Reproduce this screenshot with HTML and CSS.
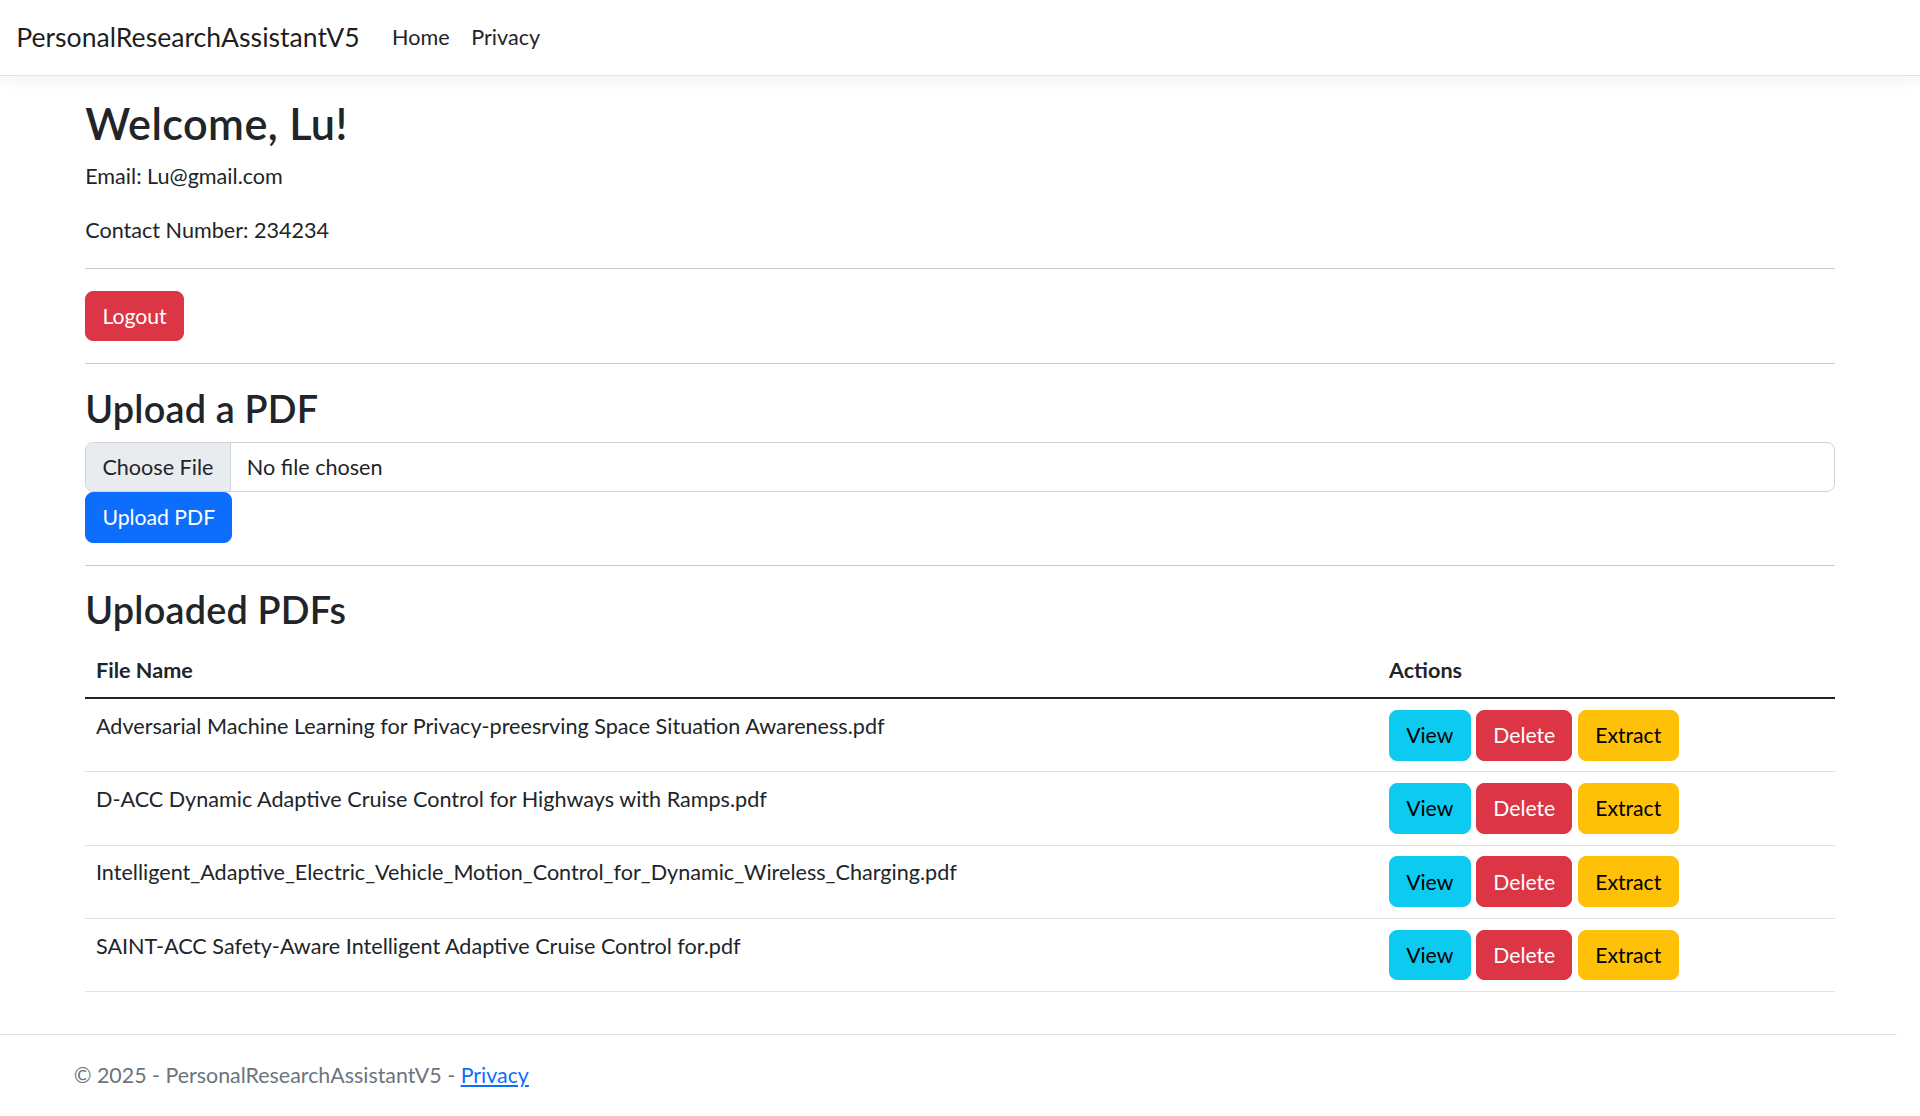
FILE: index.html
```html
<!DOCTYPE html>
<html lang="en">
<head>
<meta charset="utf-8">
<title>Home - PersonalResearchAssistantV5</title>
<link rel="stylesheet" href="styles.css">
</head>
<body>
<header>
  <nav class="navbar">
    <div class="navbar-inner">
      <a class="brand" href="#">PersonalResearchAssistantV5</a>
      <ul class="nav-links">
        <li><a class="nav-link" href="#">Home</a></li>
        <li><a class="nav-link" href="#">Privacy</a></li>
      </ul>
    </div>
  </nav>
</header>
<div class="container">
  <main class="main">
    <h2 class="welcome">Welcome, Lu!</h2>
    <p>Email: Lu@gmail.com</p>
    <p>Contact Number: 234234</p>
    <hr>
    <form class="form"><button type="button" class="btn btn-danger">Logout</button></form>
    <hr>
    <h3 class="section-title">Upload a PDF</h3>
    <form class="form">
      <div class="file-input"><span class="file-btn">Choose File</span><span class="file-name">No file chosen</span></div>
      <button type="button" class="btn btn-primary">Upload PDF</button>
    </form>
    <hr>
    <h3 class="section-title">Uploaded PDFs</h3>
    <table class="table">
      <thead>
        <tr><th class="col-name">File Name</th><th class="col-actions">Actions</th></tr>
      </thead>
      <tbody>
        <tr>
          <td>Adversarial Machine Learning for Privacy-preesrving Space Situation Awareness.pdf</td>
          <td><a class="btn btn-info">View</a> <a class="btn btn-danger">Delete</a> <a class="btn btn-warning">Extract</a></td>
        </tr>
        <tr>
          <td>D-ACC Dynamic Adaptive Cruise Control for Highways with Ramps.pdf</td>
          <td><a class="btn btn-info">View</a> <a class="btn btn-danger">Delete</a> <a class="btn btn-warning">Extract</a></td>
        </tr>
        <tr>
          <td>Intelligent_Adaptive_Electric_Vehicle_Motion_Control_for_Dynamic_Wireless_Charging.pdf</td>
          <td><a class="btn btn-info">View</a> <a class="btn btn-danger">Delete</a> <a class="btn btn-warning">Extract</a></td>
        </tr>
        <tr>
          <td>SAINT-ACC Safety-Aware Intelligent Adaptive Cruise Control for.pdf</td>
          <td><a class="btn btn-info">View</a> <a class="btn btn-danger">Delete</a> <a class="btn btn-warning">Extract</a></td>
        </tr>
      </tbody>
    </table>
  </main>
</div>
<footer class="footer">
  <div class="footer-inner">&copy; 2025 - PersonalResearchAssistantV5 - <a href="#">Privacy</a></div>
</footer>
</body>
</html>
```
FILE: styles.css
```css
* { box-sizing: border-box; }

html { font-size: 21.6px; }

body {
  margin: 0;
  min-height: 100vh;
  display: flex;
  flex-direction: column;
  font-family: "Lato", "Liberation Sans", sans-serif;
  font-size: 21.6px;
  line-height: 32.4px;
  color: #212529;
  background: #fff;
}

a { color: #0d6efd; }

.navbar {
  background: #fff;
  border-bottom: 1px solid #dee2e6;
  box-shadow: 0 5px 16px rgba(0, 0, 0, 0.05);
  margin-bottom: 21.6px;
  height: 76px;
  padding: 0 16.2px;
  display: flex;
  align-items: center;
}

.navbar-inner {
  display: flex;
  align-items: center;
}

.brand {
  font-size: 26.6px;
  line-height: 40.5px;
  color: rgba(0, 0, 0, 0.9);
  text-decoration: none;
  margin-right: 21.6px;
  padding: 6.75px 0;
}

.nav-links {
  list-style: none;
  margin: 0;
  padding: 0;
  display: flex;
}

.nav-link {
  display: block;
  padding: 10.8px;
  color: #212529;
  text-decoration: none;
}

.container {
  width: 1782px;
  margin: 0 auto;
  padding: 0 16.2px;
}

.main { padding-bottom: 21.6px; }

.welcome {
  margin: 0 0 10.8px;
  font-size: 43.2px;
  line-height: 51.84px;
  font-weight: 600;
  letter-spacing: 0.4px;
}

p { margin: 0 0 21.6px; }

hr {
  margin: 21.6px 0;
  border: 0;
  border-top: 1px solid #c8c9ca;
  height: 0;
}

.form { margin: 0; }

.section-title {
  margin: 0 0 10.8px;
  font-size: 37.8px;
  line-height: 45.36px;
  font-weight: 600;
  letter-spacing: 0.2px;
}

.btn {
  display: inline-block;
  font: inherit;
  font-size: 21.2px;
  line-height: 32.4px;
  padding: 8.1px 16.2px;
  border: 1px solid transparent;
  border-radius: 8px;
  text-decoration: none;
  vertical-align: middle;
  cursor: pointer;
}

.btn-danger { background: #dc3545; border-color: #dc3545; color: #fff; }
.btn-primary { background: #0d6efd; border-color: #0d6efd; color: #fff; }
.btn-info { background: #0dcaf0; border-color: #0dcaf0; color: #000; }
.btn-warning { background: #ffc107; border-color: #ffc107; color: #000; }

.file-input {
  display: flex;
  align-items: stretch;
  border: 1px solid #ced4da;
  border-radius: 8px;
  overflow: hidden;
  height: 50.6px;
  background: #fff;
}

.file-btn {
  background: #e9ecef;
  border-right: 1px solid #ced4da;
  padding: 8.1px 16.2px;
  line-height: 32.4px;
  color: #212529;
}

.file-name {
  padding: 8.1px 16.2px;
  line-height: 32.4px;
}

.table {
  width: 100%;
  border-collapse: collapse;
  table-layout: fixed;
}

.table th {
  text-align: left;
  font-weight: 700;
  padding: 10.8px;
  border-bottom: 2px solid #212529;
}

.col-name { width: 1293px; }

.table td {
  padding: 10.8px;
  border-bottom: 1px solid #dee2e6;
  vertical-align: top;
}

.footer {
  margin-top: auto;
  width: calc(100% - 23px);
  border-top: 1px solid #dee2e6;
  color: #6c757d;
  font-size: 21.4px;
  line-height: 81px;
  white-space: nowrap;
}

.footer-inner {
  width: 1782px;
  margin: 0 auto;
  padding: 0 16.2px;
}
```
